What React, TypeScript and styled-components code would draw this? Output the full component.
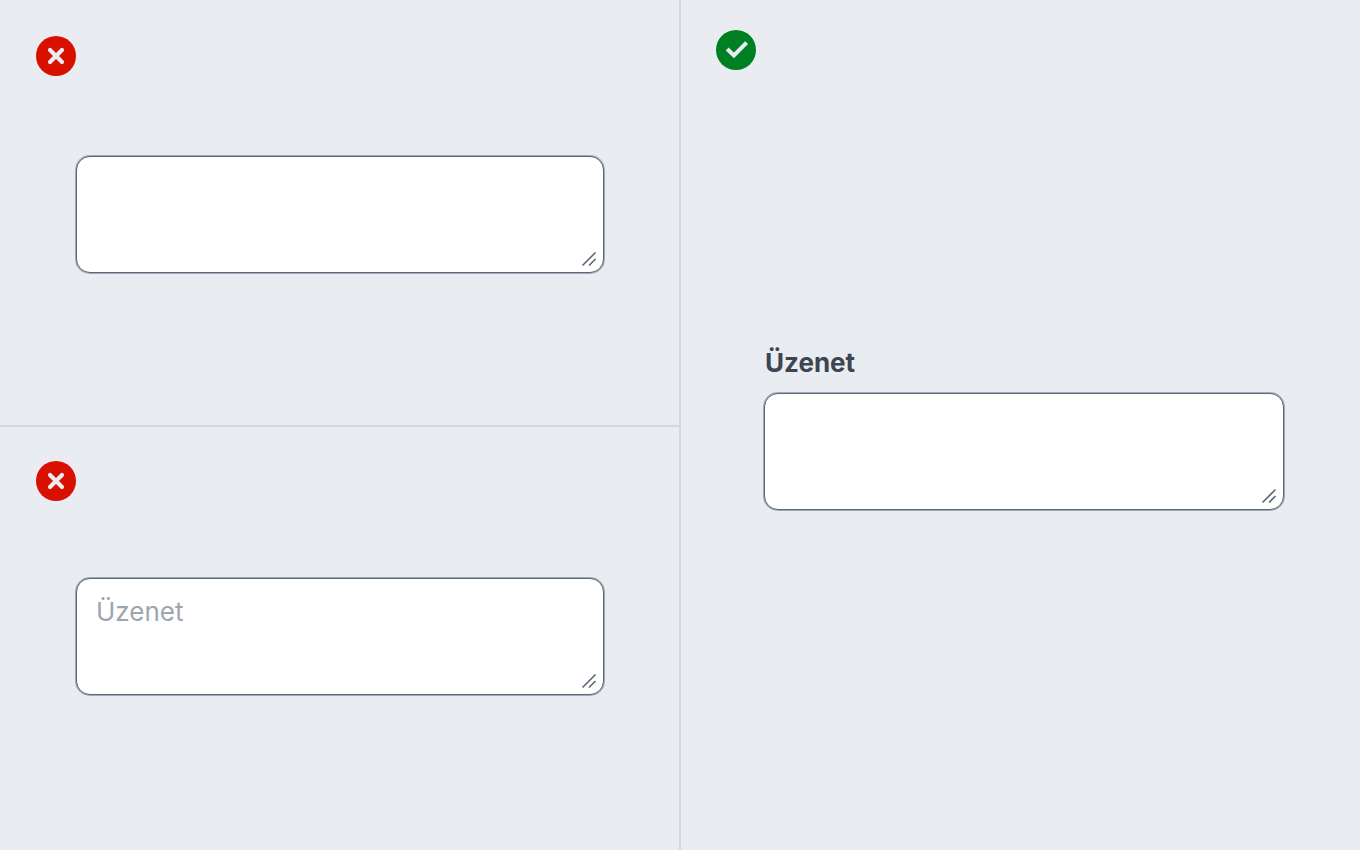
import React from "react";
import styled, { createGlobalStyle } from "styled-components";

const GlobalStyle = createGlobalStyle`
  *, *::before, *::after { box-sizing: border-box; }
  body {
    margin: 0;
    background: #e9edf2;
    font-family: Inter, "Liberation Sans", sans-serif;
  }
`;

const Page = styled.main`
  display: grid;
  grid-template-columns: 1fr 2px 1fr;
  min-height: 100vh;
`;

const Column = styled.div`
  display: grid;
  grid-auto-rows: 1fr;
`;

const Divider = styled.div`
  background: #d3d8dd;
`;

const Panel = styled.section<{ $ruled?: boolean; $top?: number; $left?: number }>`
  display: flex;
  flex-direction: column;
  padding: ${(p) => p.$top ?? 36}px 36px 36px ${(p) => p.$left ?? 36}px;
  ${(p) => p.$ruled && "border-top: 2px solid #d3d8dd;"}
`;

const Field = styled.div<{ $gap: number; $start?: number; $end?: number }>`
  display: flex;
  flex-direction: column;
  gap: 14px;
  margin-top: ${(p) => p.$gap}px;
  padding: 0 ${(p) => p.$end ?? 39}px 0 ${(p) => p.$start ?? 40}px;
`;

const Label = styled.label`
  padding-left: 1px;
  color: #3d4551;
  font-size: 26px;
  font-weight: 700;
  line-height: 32px;
`;

const BoxFrame = styled.div`
  position: relative;
  display: grid;
`;

const TextBox = styled.textarea`
  height: 117px;
  padding: 16px 19px;
  border: 1px solid #5c6878;
  border-radius: 14px;
  background: #fff;
  box-shadow: 0 0 0 1px rgba(92, 104, 120, 0.5);
  color: #3d4551;
  font: 400 26px/34px Inter, "Liberation Sans", sans-serif;
  resize: none;
  outline: none;

  &::placeholder {
    color: #9ca5b0;
    opacity: 1;
  }
`;

const Grip = styled.svg`
  position: absolute;
  right: 7px;
  bottom: 6px;
  pointer-events: none;
`;

const Mark = styled.svg`
  display: block;
  width: 40px;
  height: 40px;
`;

function WrongMark() {
  return (
    <Mark viewBox="0 0 40 40" aria-hidden="true">
      <circle cx="20" cy="20" r="20" fill="#d90f00" />
      <path d="M14 14 26 26M26 14 14 26" stroke="#e9edf2" strokeWidth="4.2" strokeLinecap="round" />
    </Mark>
  );
}

function RightMark() {
  return (
    <Mark viewBox="0 0 40 40" aria-hidden="true">
      <circle cx="20" cy="20" r="20" fill="#008024" />
      <path d="M11.2 19 17.9 25.4 30.6 12.7" fill="none" stroke="#e9edf2" strokeWidth="4" />
    </Mark>
  );
}

function MessageBox(props: React.ComponentProps<"textarea">) {
  return (
    <BoxFrame>
      <TextBox {...props} />
      <Grip width="16" height="16" viewBox="0 0 16 16" stroke="#5c6878" strokeWidth="1.6" aria-hidden="true">
        <path d="M1.5 14.5 14.5 1.5M8 14.5 14.5 8" />
      </Grip>
    </BoxFrame>
  );
}

export default function App() {
  return (
    <>
      <GlobalStyle />
      <Page>
        <Column>
          <Panel>
            <WrongMark />
            <Field $gap={80}>
              <MessageBox name="unlabelled" aria-label="Üzenet" />
            </Field>
          </Panel>
          <Panel $ruled $top={34}>
            <WrongMark />
            <Field $gap={77}>
              <MessageBox name="placeholder" placeholder="Üzenet" />
            </Field>
          </Panel>
        </Column>
        <Divider />
        <Column>
          <Panel $top={30} $left={35}>
            <RightMark />
            <Field $gap={277} $start={48} $end={40}>
              <Label htmlFor="message">Üzenet</Label>
              <MessageBox id="message" name="message" />
            </Field>
          </Panel>
        </Column>
      </Page>
    </>
  );
}
